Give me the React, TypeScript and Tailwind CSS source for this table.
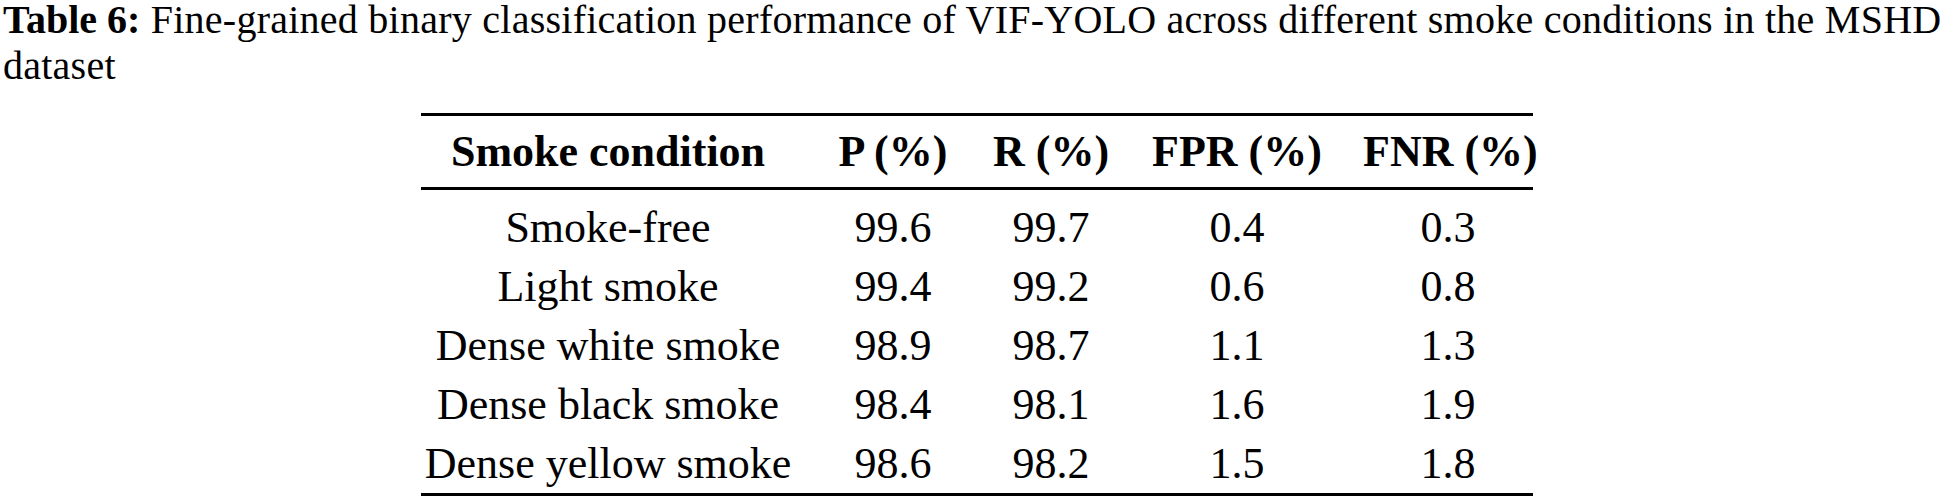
import React from "react";

const rows: string[][] = [
  ["Smoke-free", "99.6", "99.7", "0.4", "0.3"],
  ["Light smoke", "99.4", "99.2", "0.6", "0.8"],
  ["Dense white smoke", "98.9", "98.7", "1.1", "1.3"],
  ["Dense black smoke", "98.4", "98.1", "1.6", "1.9"],
  ["Dense yellow smoke", "98.6", "98.2", "1.5", "1.8"],
];

const headers = ["Smoke condition", "P (%)", "R (%)", "FPR (%)", "FNR (%)"];

export default function App() {
  return (
    <div className="w-[1954px] h-[497px] overflow-hidden bg-white text-black font-['Liberation_Serif',serif]">
      <p className="-mt-[3px] pl-[3px] text-[40px] leading-[46px] tracking-[0.25px]">
        <span className="font-bold tracking-normal">Table 6:</span> Fine-grained binary classification performance of
        VIF-YOLO across different smoke conditions in the MSHD dataset
      </p>
      <div className="mx-auto mt-[24px] w-[1112px]">
        <div className="h-[3px] bg-black" />
        <div className="grid grid-cols-[374px_196px_120px_252px_170px] h-[71px] items-center text-[44px] font-bold leading-[50px]">
          {headers.map((h) => (
            <div key={h} className="text-center whitespace-nowrap">
              {h}
            </div>
          ))}
        </div>
        <div className="h-[3px] bg-black" />
        <div className="pt-[8px] text-[44px] leading-[59px]">
          {rows.map((r) => (
            <div key={r[0]} className="grid grid-cols-[374px_196px_120px_252px_170px]">
              {r.map((c, i) => (
                <div key={i} className="text-center whitespace-nowrap">
                  {c}
                </div>
              ))}
            </div>
          ))}
        </div>
        <div className="h-[3px] bg-black" />
      </div>
    </div>
  );
}
